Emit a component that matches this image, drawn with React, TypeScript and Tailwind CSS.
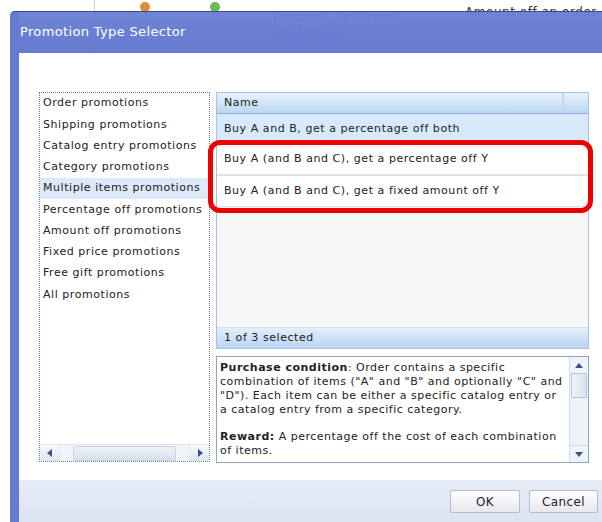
import React from "react";

const categories = [
  "Order promotions",
  "Shipping promotions",
  "Catalog entry promotions",
  "Category promotions",
  "Multiple items promotions",
  "Percentage off promotions",
  "Amount off promotions",
  "Fixed price promotions",
  "Free gift promotions",
  "All promotions",
];

const rows = [
  { name: "Buy A and B, get a percentage off both", selected: true },
  { name: "Buy A (and B and C), get a percentage off Y", selected: false },
  { name: "Buy A (and B and C), get a fixed amount off Y", selected: false },
];

function ArrowLeft() {
  return (
    <svg width="6" height="8" viewBox="0 0 6 8">
      <path d="M5 0 L0 4 L5 8 Z" fill="#3a4f8c" />
    </svg>
  );
}
function ArrowRight() {
  return (
    <svg width="6" height="8" viewBox="0 0 6 8">
      <path d="M1 0 L6 4 L1 8 Z" fill="#3a4f8c" />
    </svg>
  );
}
function ArrowUp() {
  return (
    <svg width="8" height="5" viewBox="0 0 8 5">
      <path d="M0 5 L4 0 L8 5 Z" fill="#3a4f8c" />
    </svg>
  );
}
function ArrowDown() {
  return (
    <svg width="8" height="5" viewBox="0 0 8 5">
      <path d="M0 0 L4 5 L8 0 Z" fill="#3a4f8c" />
    </svg>
  );
}

export default function App() {
  return (
    <div className="relative w-[602px] h-[522px] overflow-hidden bg-white font-['DejaVu_Sans',sans-serif] text-[11px] tracking-[0.55px] text-[#222]">
      {/* application behind the dialog */}
      <div className="flex h-[60px] text-[12px] text-[#333]">
        <div className="w-[95px] border-r border-[#c6cee0]" />
        <div className="w-[178px] flex items-start gap-[60px] pl-[45px] pt-[2px]">
          <div className="w-[10px] h-[10px] rounded-full bg-[#e08a3c]" />
          <div className="w-[10px] h-[10px] rounded-full bg-[#6cb85a]" />
        </div>
        <div className="w-[192px] pt-[10px] leading-[15px]">
          Discount for Repeat
          <br />
          Customers
        </div>
        <div className="pt-[5px] leading-[15px]">Amount off an order</div>
      </div>

      {/* dialog window */}
      <div className="absolute left-[10px] top-[11px] w-[610px] h-[530px] rounded-tl-[5px] border-t border-[#3c4a86] bg-[rgba(96,118,208,0.97)] flex flex-col pl-[9px]">
        <div className="h-[41px] flex items-center pl-[1px] pb-[1px] text-white text-[13px] tracking-[0.35px] bg-gradient-to-b from-[rgba(255,255,255,0.08)] to-transparent">
          Promotion Type Selector
        </div>

        <div className="flex flex-col flex-1 bg-white">
          <div className="h-[427px] flex gap-[6px] pl-[20px] pt-[39px]">
            {/* category list */}
            <div className="w-[171px] h-[370px] border border-dotted border-[#6c7a9c] flex flex-col">
              <div className="flex-1 flex flex-col overflow-hidden">
                {categories.map((c, i) => (
                  <div
                    key={c}
                    className={
                      i === 4
                        ? "h-[21.25px] shrink-0 flex items-center pl-[3px] whitespace-nowrap bg-[#dce9f8]"
                        : "h-[21.25px] shrink-0 flex items-center pl-[3px] whitespace-nowrap"
                    }
                  >
                    {c}
                  </div>
                ))}
              </div>
              <div className="h-[17px] flex border-t border-[#dde3ee] bg-[#f3f6fb]">
                <div className="w-[20px] flex items-center justify-center bg-gradient-to-b from-[#f6f9fd] to-[#dfe7f3] border-r border-[#e4e9f2]">
                  <ArrowLeft />
                </div>
                <div className="flex-1 flex items-center px-[13px] bg-[#f1f4f9]">
                  <div className="h-[15px] w-full rounded-[2px] border border-[#c9d3e3] bg-gradient-to-b from-[#eef3fa] to-[#d6e0ef]" />
                </div>
                <div className="w-[20px] flex items-center justify-center bg-gradient-to-b from-[#f6f9fd] to-[#dfe7f3] border-l border-[#e4e9f2]">
                  <ArrowRight />
                </div>
              </div>
            </div>

            {/* right column */}
            <div className="w-[373px] flex flex-col gap-[7px]">
              <div className="h-[257px] border border-[#a7c1e6] flex flex-col bg-[#f7f7f7]">
                <div className="h-[21px] flex border-b border-[#8fb0e0] bg-gradient-to-b from-[#e8f3fe] to-[#bcd6f4]">
                  <div className="flex-1 flex items-center pl-[7px] border-r-2 border-[#c9d6e6]">Name</div>
                  <div className="w-[24px]" />
                </div>
                {rows.map((r, i) => (
                  <div
                    key={r.name}
                    className={
                      r.selected
                        ? "h-[31px] flex items-center pl-[7px] whitespace-nowrap bg-[#d7eafc] border-b border-[#cddbea]"
                        : i === 1
                          ? "h-[31px] flex items-center pl-[7px] whitespace-nowrap bg-white border-b-2 border-[#e2e2e2]"
                          : "h-[31px] flex items-center pl-[7px] whitespace-nowrap bg-white border-b border-[#e2e2e2]"
                    }
                  >
                    {r.name}
                  </div>
                ))}
                <div className="flex-1" />
                <div className="h-[21px] flex items-center pl-[7px] pt-[1px] border-t border-[#cfe0f2] bg-gradient-to-b from-[#e4effb] to-[#bad4f2]">
                  1 of 3 selected
                </div>
              </div>

              <div className="h-[107px] border border-[#8fa3c7] bg-white flex">
                <div className="flex-1 pl-[3px] pt-[4px] leading-[14px] whitespace-nowrap overflow-hidden tracking-[0.5px]">
                  <p>
                    <b>Purchase condition</b>: Order contains a specific
                    <br />
                    combination of items ("A" and "B" and optionally "C" and
                    <br />
                    "D"). Each item can be either a specific catalog entry or
                    <br />a catalog entry from a specific category.
                  </p>
                  <p className="mt-[13px]">
                    <b>Reward:</b> A percentage off the cost of each combination
                    <br />
                    of items.
                  </p>
                </div>
                <div className="w-[19px] flex flex-col border-l border-[#d4dceb] bg-[#eef2f9]">
                  <div className="h-[16px] flex items-center justify-center">
                    <ArrowUp />
                  </div>
                  <div className="h-[25px] mx-[1px] rounded-[1px] border border-[#b8c4d8] bg-gradient-to-r from-[#eef3fa] to-[#d9e2ef]" />
                  <div className="flex-1" />
                  <div className="h-[17px] flex items-center justify-center border-t border-[#d4dceb]">
                    <ArrowDown />
                  </div>
                </div>
              </div>
            </div>
          </div>

          {/* button bar */}
          <div className="flex-1 flex items-start justify-end gap-[9px] pr-[22px] pt-[9px] border-t border-[#e9edf6] bg-gradient-to-b from-[#e6ebf7] to-[#d9e0f2]">
            <button className="w-[70px] h-[23px] rounded-[2px] border border-[#b5bccb] bg-gradient-to-b from-white to-[#e6e8ee] text-[12px] tracking-[0.4px] text-[#222]">
              OK
            </button>
            <button className="w-[69px] h-[23px] rounded-[2px] border border-[#b5bccb] bg-gradient-to-b from-white to-[#e6e8ee] text-[12px] tracking-[0.4px] text-[#222]">
              Cancel
            </button>
          </div>
        </div>
      </div>

      {/* highlight drawn over the two rows */}
      <div className="absolute left-[208px] top-[140px] w-[385px] h-[73px] rounded-[12px] border-[5px] border-[#ee0000]" />
    </div>
  );
}
